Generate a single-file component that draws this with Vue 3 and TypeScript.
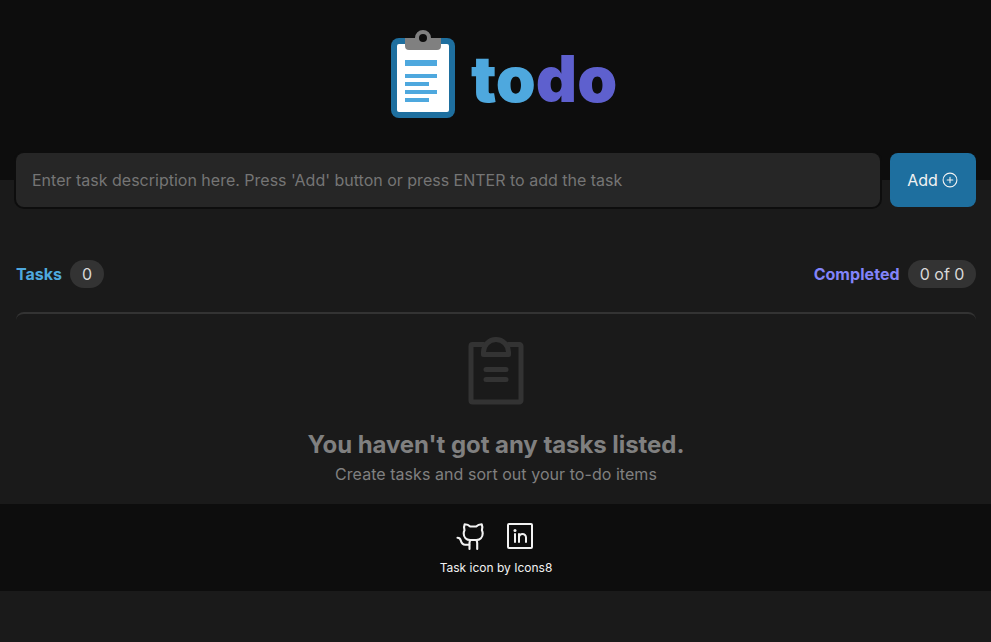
<script setup lang="ts">
import { computed, ref } from 'vue'

interface Task {
  id: number
  text: string
  done: boolean
}

const draft = ref('')
const tasks = ref<Task[]>([])
const completed = computed(() => tasks.value.filter((task) => task.done).length)

function addTask(): void {
  const text = draft.value.trim()
  if (!text) return
  tasks.value.push({ id: Date.now(), text, done: false })
  draft.value = ''
}
</script>

<template>
  <div class="page">
    <header class="header">
      <svg class="logo-icon" viewBox="0 0 48 48" width="96" height="96">
        <rect x="8" y="6" width="32" height="40" rx="4" fill="#1e6f9f" />
        <rect x="11" y="9" width="26" height="34" rx="1" fill="#fff" />
        <path fill="#808080" d="M15 6h5a4 4 0 0 1 8 0h5v4a2 2 0 0 1-2 2H17a2 2 0 0 1-2-2z" />
        <circle cx="24" cy="6" r="2" fill="#0d0d0d" />
        <path fill="#4ea8de" d="M15 17h16v3H15zM15 24h16v2H15zM15 28h12v2H15zM15 32h16v2H15zM15 36h12v2H15z" />
      </svg>
      <h1 class="wordmark"><span class="to">to</span><span class="do">do</span></h1>
    </header>

    <main class="main">
      <form class="entry" @submit.prevent="addTask">
        <input v-model="draft" class="field" type="text" placeholder="Enter task description here. Press 'Add' button or press ENTER to add the task" />
        <button class="add" type="submit">
          <span>Add</span>
          <svg viewBox="0 0 16 16" width="16" height="16" fill="none" stroke="currentColor" stroke-width="1.1" stroke-linecap="round">
            <circle cx="8" cy="8" r="6.9" />
            <path d="M8 5.2v5.6M5.2 8h5.6" />
          </svg>
        </button>
      </form>

      <div class="summary">
        <div class="stat created"><strong>Tasks</strong><span class="badge">{{ tasks.length }}</span></div>
        <div class="stat finished"><strong>Completed</strong><span class="badge">{{ completed }} of {{ tasks.length }}</span></div>
      </div>

      <section v-if="tasks.length === 0" class="empty">
        <svg class="empty-icon" viewBox="0 0 56 68" width="56" height="68" fill="none" stroke="#333" stroke-width="5" stroke-linejoin="round" stroke-linecap="round">
          <path d="M15.5 7.5H4.5A1.500 1.500 0 0 0 3 9v54.500A1.500 1.500 0 0 0 4.500 65h47a1.500 1.500 0 0 0 1.500-1.500V9a1.500 1.500 0 0 0-1.500-1.500h-11" />
          <path d="M15.500 17.500V15a12.500 12.500 0 0 1 25 0v2.500z" />
          <path d="M18 32.500h20M18 42.500h20" />
        </svg>
        <h2>You haven't got any tasks listed.</h2>
        <p>Create tasks and sort out your to-do items</p>
      </section>
      <ul v-else class="list">
        <li v-for="task in tasks" :key="task.id">
          <label><input v-model="task.done" type="checkbox" /> {{ task.text }}</label>
        </li>
      </ul>
    </main>

    <footer class="footer">
      <div class="social">
        <svg viewBox="0.800 0 32 32" width="32" height="32" fill="none" stroke="currentColor" stroke-width="2.100" stroke-linecap="round" stroke-linejoin="round">
          <path d="M15 6.500C13.700 5.200 12.200 4.400 9.500 4.200c-.9 2-.9 4.200-.2 6.100-.5 1-.8 2-.8 3.200 0 3.700 2.700 6.500 6.500 6.500h6c3.800 0 6.500-2.800 6.500-6.500 0-1.200-.3-2.200-.8-3.200.7-1.900.7-4.100-.2-6.100-2.700.2-4.200 1-5.500 2.300z" />
          <path d="M14.300 29v-6c0-1.300.3-2.200 1-3M22 29v-6c0-1.300-.3-2.200-1-3" />
          <path d="M2.300 17.800c1.800 0 2.800.9 3.300 2.700.7 2.600 1.900 4.200 4.400 4.200h4" />
        </svg>
        <svg viewBox="0 0 32 32" width="32" height="32" fill="none" stroke="currentColor" stroke-width="2">
          <rect x="4" y="4" width="24" height="24" rx="1" />
          <path d="M11 14V22M15 14V22M15 17.500a3.500 3.500 0 0 1 7 0V22" stroke-linecap="round" />
          <circle cx="11" cy="10.500" r="1.500" fill="currentColor" stroke="none" />
        </svg>
      </div>
      <p>Task icon by Icons8</p>
    </footer>
  </div>
</template>

<style>
body {
  margin: 0;
  background: #1a1a1a;
}
</style>

<style scoped>
.page {
  font-family: Inter, sans-serif;
  font-size: 16px;
  color: #f2f2f2;
}
.header {
  box-sizing: border-box;
  height: 180px;
  padding: 26px 0 0 1px;
  background: #0d0d0d;
  display: flex;
  justify-content: center;
  align-items: flex-start;
}
.logo-icon {
  flex: none;
}
.wordmark {
  margin: 14px 0 0;
  font-size: 64px;
  line-height: 78px;
  font-weight: 900;
}
.to {
  color: #4ea8de;
}
.do {
  color: #5e60ce;
}
.main {
  padding: 0 15px 0 16px;
}
.entry {
  display: flex;
  gap: 10px;
  margin-top: -27px;
}
.field {
  box-sizing: border-box;
  flex: 1;
  min-width: 0;
  height: 54px;
  padding: 0 16px;
  border: 0;
  border-radius: 8px;
  outline: 0;
  background: #262626;
  box-shadow: 0 0 0 2px #0d0d0d;
  color: #f2f2f2;
  font: 16px Inter, sans-serif;
}
.field::placeholder {
  color: #757575;
}
.add {
  box-sizing: border-box;
  width: 86px;
  height: 54px;
  padding: 0 1px 0 0;
  border: 0;
  border-radius: 8px;
  background: #1e6f9f;
  color: #f2f2f2;
  font: 16px Inter, sans-serif;
  display: flex;
  align-items: center;
  justify-content: center;
  gap: 4px;
}
.summary {
  display: flex;
  justify-content: space-between;
  margin: 53px 0 24px;
}
.stat {
  display: flex;
  align-items: center;
  gap: 8px;
}
.created {
  color: #4ea8de;
}
.finished {
  color: #8284fa;
  gap: 8.5px;
}
.finished strong {
  letter-spacing: 0.05px;
}
.badge {
  padding: 0 12px;
  border-radius: 14px;
  line-height: 28px;
  background: #333;
  color: #d9d9d9;
}
.finished .badge {
  padding: 0 11.6px;
}
.empty {
  box-sizing: border-box;
  height: 192px;
  padding-top: 23px;
  border-top: 2px solid #333;
  border-radius: 8px;
  color: #808080;
  display: flex;
  flex-direction: column;
  align-items: center;
}
.empty h2 {
  margin: 25px 0 0;
  font-size: 24px;
  line-height: 29px;
  letter-spacing: -0.06px;
}
.empty p {
  margin: 5px 0 0;
  line-height: 20px;
  letter-spacing: 0.05px;
}
.list {
  margin: 0;
  padding: 16px;
  border-top: 2px solid #333;
  border-radius: 8px;
  list-style: none;
}
.footer {
  box-sizing: border-box;
  height: 87px;
  padding-top: 16px;
  background: #0d0d0d;
  text-align: center;
}
.social {
  display: flex;
  justify-content: center;
  gap: 16px;
  height: 32px;
}
.footer p {
  margin: 8px 0 0;
  padding-left: 1px;
  font-size: 12px;
  line-height: 15px;
}
</style>
